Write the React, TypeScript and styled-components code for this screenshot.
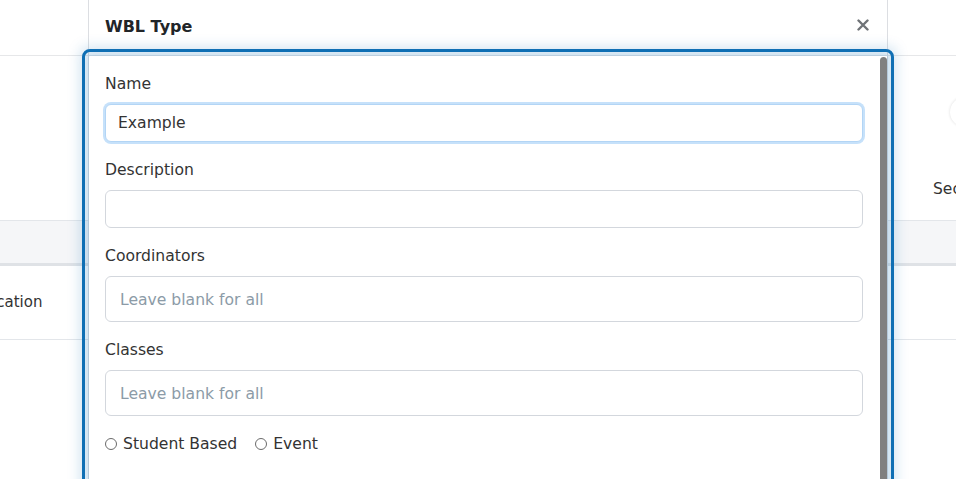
import React from 'react'
import styled, { createGlobalStyle } from 'styled-components'

const GlobalStyle = createGlobalStyle`
html, body {
  margin: 0;
  padding: 0;
  background: #fff;
  overflow: hidden;
}
body {
  font-family: "DejaVu Sans", "Liberation Sans", sans-serif;
  color: #333;
}
* { box-sizing: border-box; }
`;

/* page behind the dialog */
const Page = styled.div`
width: 100%;
height: 479px;
overflow: hidden;
`;
const TopBar = styled.div`
height: 56px;
border-bottom: 1px solid #e6e7e9;
`;
const FilterArea = styled.div`
height: 164px;
display: flex;
justify-content: flex-end;
padding-top: 41px;
`;
const FilterCol = styled.div`
width: 23px;
display: flex;
flex-direction: column;
align-items: flex-start;
gap: 53px;
`;
const RoundButton = styled.div`
width: 40px;
height: 30px;
flex: none;
margin-left: 17px;
border-radius: 15px;
background: #fff;
box-shadow: 0 0 3px rgba(0, 0, 0, 0.14);
`;
const FilterLabel = styled.span`
font-size: 15.5px;
white-space: nowrap;
color: #333;
`;
const TableHead = styled.div`
height: 46px;
background: #f5f6f8;
border-top: 1px solid #e3e6ea;
border-bottom: 3px solid #dfe2e6;
`;
const TableRow = styled.div`
height: 74px;
display: flex;
align-items: center;
padding-bottom: 2px;
border-bottom: 1px solid #e3e6ea;
margin-left: -21px;
font-size: 15px;
color: #333;
`;

/* dialog */
const Overlay = styled.div`
position: fixed;
inset: 0;
`;
const Dialog = styled.div`
margin-left: 88px;
width: 800px;
background: #fff;
border-left: 1px solid #dcdee2;
border-right: 1px solid #dcdee2;
`;
const Header = styled.div`
height: 56px;
display: flex;
align-items: center;
justify-content: space-between;
padding: 0 18px 3px 16px;
border-bottom: 1px solid #e6e7e9;
`;
const Title = styled.h5`
margin: 0;
font-size: 16px;
font-weight: 700;
color: #212529;
`;
const CloseButton = styled.button`
border: 0;
background: none;
padding: 0 0 3px;
display: flex;
cursor: pointer;
`;
const Body = styled.div<{ $focused?: boolean }>`
height: 560px;
display: flex;
overflow: hidden;
border-radius: 1px;
outline: ${(p) => (p.$focused ? '3px solid #0f6fb4' : 'none')};
outline-offset: 4px;
box-shadow: ${(p) => (p.$focused ? '0 0 14px 8px rgba(15, 111, 180, 0.22)' : 'none')};
`;
const Form = styled.form`
flex: 1;
padding: 16px;
`;
const ScrollTrack = styled.div`
width: 8px;
flex: none;
padding: 1px 0 0 1px;
background: #fff;
`;
const ScrollThumb = styled.div`
height: 500px;
border-radius: 4px;
background: #808080;
`;
const Field = styled.div`
margin-bottom: 16px;
`;
const Label = styled.label`
display: block;
font-size: 15.6px;
line-height: 24px;
color: #333;
margin-bottom: 8px;
`;
const Input = styled.input<{ $tall?: boolean; $focused?: boolean }>`
display: block;
width: 100%;
height: ${(p) => (p.$tall ? '46px' : '38px')};
padding: ${(p) => (p.$tall ? '2px 14px 0' : '0 12px')};
font-family: inherit;
font-size: 15.6px;
color: #333;
background: #fff;
border: 1px solid ${(p) => (p.$focused ? '#b3d5f5' : '#d3d7dd')};
border-radius: 6px;
box-shadow: ${(p) => (p.$focused ? '0 0 0 2px #c6e1fa' : 'none')};
outline: none;
&::placeholder {
  color: #8c9ba7;
}
`;
const RadioRow = styled.div`
display: flex;
align-items: center;
gap: 18px;
font-size: 15.6px;
line-height: 24px;
margin-bottom: 24px;
`;
const RadioLabel = styled.label`
display: flex;
align-items: center;
gap: 6px;
color: #333;
`;
const Radio = styled.input`
appearance: none;
margin: 0;
width: 12px;
height: 12px;
border: 1px solid #6b6b6b;
border-radius: 50%;
background: #fff;
`;
const Footer = styled.div`
display: flex;
justify-content: flex-end;
gap: 8px;
padding-top: 8px;
`;
const Button = styled.button<{ $primary?: boolean }>`
font-family: inherit;
font-size: 15px;
padding: 8px 18px;
border-radius: 6px;
border: 0;
color: #fff;
background: ${(p) => (p.$primary ? '#0f6fb4' : '#6c757d')};
`;

const CloseIcon = () => (
  <svg width="12" height="12" viewBox="0 0 12 12">
    <path d="M1.5 1.5 L10.5 10.5 M10.5 1.5 L1.5 10.5" stroke="#6f7377" strokeWidth="2.4" strokeLinecap="round" />
  </svg>
);

export default function App() {
  return (
    <>
      <GlobalStyle />
      <Page>
        <TopBar />
        <FilterArea>
          <FilterCol>
            <RoundButton />
            <FilterLabel>Section</FilterLabel>
          </FilterCol>
        </FilterArea>
        <TableHead />
        <TableRow>Location</TableRow>
      </Page>
      <Overlay>
        <Dialog>
          <Header>
            <Title>WBL Type</Title>
            <CloseButton type="button" aria-label="Close"><CloseIcon /></CloseButton>
          </Header>
          <Body $focused tabIndex={0}>
            <Form>
              <Field>
                <Label>Name</Label>
                <Input $focused defaultValue="Example" />
              </Field>
              <Field>
                <Label>Description</Label>
                <Input />
              </Field>
              <Field>
                <Label>Coordinators</Label>
                <Input $tall placeholder="Leave blank for all" />
              </Field>
              <Field>
                <Label>Classes</Label>
                <Input $tall placeholder="Leave blank for all" />
              </Field>
              <RadioRow>
                <RadioLabel><Radio type="radio" name="kind" />Student Based</RadioLabel>
                <RadioLabel><Radio type="radio" name="kind" />Event</RadioLabel>
              </RadioRow>
              <Field>
                <Label>Required Hours</Label>
                <Input />
              </Field>
              <Footer>
                <Button type="button">Close</Button>
                <Button type="button" $primary>Save</Button>
              </Footer>
            </Form>
            <ScrollTrack>
              <ScrollThumb />
            </ScrollTrack>
          </Body>
        </Dialog>
      </Overlay>
    </>
  )
}
